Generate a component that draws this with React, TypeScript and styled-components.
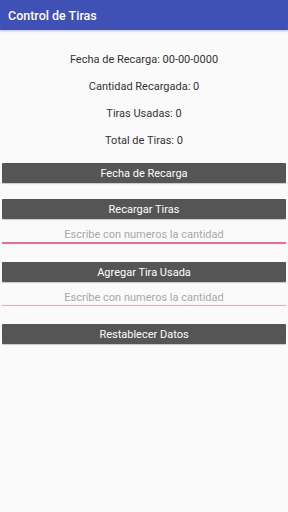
import React from "react";
import styled, { createGlobalStyle } from "styled-components";

const Global = createGlobalStyle`
  html, body { margin: 0; padding: 0; background: #fafafa; }
  body { font-family: Roboto, "Noto Sans", sans-serif; }
  * { box-sizing: border-box; }
`;

const Page = styled.div`
  width: 288px;
  min-height: 512px;
  background: #fafafa;
  display: flex;
  flex-direction: column;
`;

const AppBar = styled.header`
  height: 30px;
  background: #3f51b5;
  display: flex;
  align-items: center;
  padding-left: 8px;
  color: #fff;
  font-size: 12.5px;
  font-weight: 500;
  box-shadow: 0 1px 2px rgba(0, 0, 0, 0.25);
`;

const Content = styled.main`
  display: flex;
  flex-direction: column;
  padding: 16px 2px 0;
`;

const Info = styled.div`
  height: 27px;
  line-height: 27px;
  text-align: center;
  font-size: 11px;
  color: #333;
`;

const Button = styled.button<{ $mt: number }>`
  margin-top: ${(p) => p.$mt}px;
  height: 20px;
  width: 100%;
  border: none;
  border-radius: 1px;
  background: #555555;
  color: #fff;
  font-family: Roboto, "Noto Sans", sans-serif;
  font-size: 11px;
  padding: 0;
  box-shadow: 0 1px 1px rgba(0, 0, 0, 0.2);
`;

const Field = styled.input<{ $focused?: boolean }>`
  margin-top: 3px;
  height: ${(p) => (p.$focused ? 22 : 21)}px;
  width: 100%;
  border: none;
  border-bottom: ${(p) => (p.$focused ? "2px solid #ec6a98" : "1px solid #f4a3c0")};
  background: transparent;
  text-align: center;
  font-family: Roboto, "Noto Sans", sans-serif;
  font-size: 11px;
  padding: 4px 0 0;
  outline: none;
  &::placeholder { color: #a8a8a8; }
`;

export default function App() {
  return (
    <Page>
      <Global />
      <AppBar>Control de Tiras</AppBar>
      <Content>
        <Info>Fecha de Recarga: 00-00-0000</Info>
        <Info>Cantidad Recargada: 0</Info>
        <Info>Tiras Usadas: 0</Info>
        <Info>Total de Tiras: 0</Info>
        <Button $mt={9}>Fecha de Recarga</Button>
        <Button $mt={16}>Recargar Tiras</Button>
        <Field $focused placeholder="Escribe con numeros la cantidad" />
        <Button $mt={18}>Agregar Tira Usada</Button>
        <Field placeholder="Escribe con numeros la cantidad" />
        <Button $mt={18}>Restablecer Datos</Button>
      </Content>
    </Page>
  );
}
